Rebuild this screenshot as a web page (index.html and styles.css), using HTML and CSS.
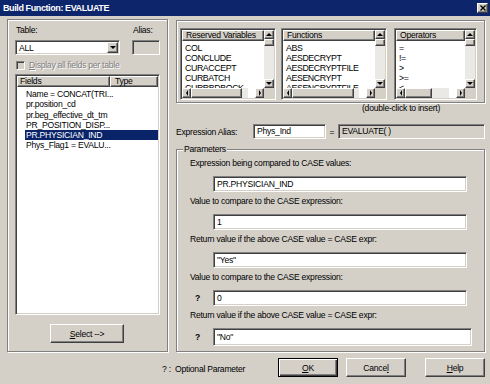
FILE: index.html
```html
<!DOCTYPE html>
<html lang="en">
<head>
    <meta charset="UTF-8">
    <title>Build Function: EVALUATE</title>
    <link rel="stylesheet" href="styles.css">
</head>
<body>
<div class="dialog">
    <div class="titlebar">
        <span class="title">Build Function: EVALUATE</span>
        <span class="close raised">
            <svg width="6" height="6" viewBox="0 0 6 6"><path d="M0.5 0.5L5.5 5.5M5.5 0.5L0.5 5.5" stroke="#000" stroke-width="1.4"/></svg>
        </span>
    </div>

    <div class="main">
        <!-- Left: table / fields -->
        <div class="group left-group">
            <div class="table-row">
                <div class="table-col">
                    <div class="lbl">Table:</div>
                    <div class="combo sunken">
                        <span class="combo-text">ALL</span>
                        <span class="combo-btn raised arr down"></span>
                    </div>
                </div>
                <div class="alias-col">
                    <div class="lbl">Alias:</div>
                    <div class="alias-box sunken"></div>
                </div>
            </div>
            <div class="check-row">
                <span class="checkbox sunken"></span>
                <span class="disabled"><u>D</u>isplay all fields per table</span>
            </div>
            <div class="fields sunken">
                <div class="fields-head">
                    <span class="hdr raised hdr-fields">Fields</span>
                    <span class="hdr raised hdr-type">Type</span>
                </div>
                <ul class="fields-list">
                    <li>Name = CONCAT(TRI...</li>
                    <li>pr.position_cd</li>
                    <li>pr.beg_effective_dt_tm</li>
                    <li>PR_POSITION_DISP...</li>
                    <li class="selected">PR.PHYSICIAN_IND</li>
                    <li>Phys_Flag1 = EVALU...</li>
                </ul>
            </div>
            <div class="select-row">
                <button class="push select"><u>S</u>elect --&gt;</button>
            </div>
        </div>

        <!-- Right: lists, alias, parameters -->
        <div class="right">
            <div class="group lists">
                <div class="listbox sunken lb-vars">
                    <div class="hdr raised">Reserved Variables</div>
                    <div class="vscroll">
                        <span class="sb-btn raised arr up"></span>
                        <span class="thumb raised"></span>
                        <span class="track"></span>
                        <span class="sb-btn raised arr down"></span>
                    </div>
                    <ul class="items">
                        <li>COL</li>
                        <li>CONCLUDE</li>
                        <li>CURACCEPT</li>
                        <li>CURBATCH</li>
                        <li>CURRBDBOCK</li>
                    </ul>
                    <div class="hscroll">
                        <span class="sb-btn raised arr left"></span>
                        <span class="thumb raised" style="width: 51px"></span>
                        <span class="track"></span>
                        <span class="sb-btn raised arr right"></span>
                    </div>
                    <span class="corner"></span>
                </div>

                <div class="listbox sunken lb-funcs">
                    <div class="hdr raised">Functions</div>
                    <div class="vscroll">
                        <span class="sb-btn raised arr up"></span>
                        <span class="thumb raised"></span>
                        <span class="track"></span>
                        <span class="sb-btn raised arr down"></span>
                    </div>
                    <ul class="items">
                        <li>ABS</li>
                        <li>AESDECRYPT</li>
                        <li>AESDECRYPTFILE</li>
                        <li>AESENCRYPT</li>
                        <li>AESENCRYPTFILE</li>
                    </ul>
                    <div class="hscroll">
                        <span class="sb-btn raised arr left"></span>
                        <span class="thumb raised" style="width: 62px"></span>
                        <span class="track"></span>
                        <span class="sb-btn raised arr right"></span>
                    </div>
                    <span class="corner"></span>
                </div>

                <div class="listbox sunken lb-ops">
                    <div class="hdr raised">Operators</div>
                    <div class="vscroll">
                        <span class="sb-btn raised arr up"></span>
                        <span class="thumb raised"></span>
                        <span class="track"></span>
                        <span class="sb-btn raised arr down"></span>
                    </div>
                    <ul class="items">
                        <li>=</li>
                        <li>!=</li>
                        <li>&gt;</li>
                        <li>&gt;=</li>
                        <li>&lt;</li>
                    </ul>
                    <div class="hscroll">
                        <span class="sb-btn raised arr left"></span>
                        <span class="thumb raised" style="width: 27px"></span>
                        <span class="track"></span>
                        <span class="sb-btn raised arr right"></span>
                    </div>
                    <span class="corner"></span>
                </div>
            </div>

            <div class="hint">(double-click to insert)</div>

            <div class="alias-row">
                <span class="alias-lbl">Expression Alias:</span>
                <div class="field sunken alias-field">Phys_Ind</div>
                <span class="eq">=</span>
                <div class="field sunken readonly">EVALUATE( )</div>
            </div>

            <div class="group params">
                <span class="caption">Parameters</span>

                <div class="p-lbl">Expression being compared to CASE values:</div>
                <div class="p-row"><span class="opt"></span><div class="field sunken">PR.PHYSICIAN_IND</div></div>

                <div class="p-lbl">Value to compare to the CASE expression:</div>
                <div class="p-row"><span class="opt"></span><div class="field sunken">1</div></div>

                <div class="p-lbl">Return value if the above CASE value = CASE expr:</div>
                <div class="p-row"><span class="opt"></span><div class="field sunken">"Yes"</div></div>

                <div class="p-lbl">Value to compare to the CASE expression:</div>
                <div class="p-row"><span class="opt">?</span><div class="field sunken">0</div></div>

                <div class="p-lbl">Return value if the above CASE value = CASE expr:</div>
                <div class="p-row last"><span class="opt">?</span><div class="field sunken">"No"</div></div>
            </div>
        </div>
    </div>

    <div class="footer">
        <span class="legend-note">? :&nbsp; Optional Parameter</span>
        <button class="push default"><u>O</u>K</button>
        <button class="push cancel">Cance<u>l</u></button>
        <button class="push help"><u>H</u>elp</button>
    </div>
</div>
</body>
</html>
```

FILE: styles.css
```css
* { box-sizing: border-box; }

body {
    margin: 0;
    background: #d4d0c8;
    font-family: "Liberation Sans", Arial, sans-serif;
    font-size: 8.6px;
    letter-spacing: -0.25px;
    color: #000;
}

ul { list-style: none; margin: 0; padding: 0; }

.dialog { width: 490px; height: 384px; overflow: hidden; }

/* 3D borders, classic style */
.raised {
    background: #d4d0c8;
    border: 1px solid;
    border-color: #fff #404040 #404040 #fff;
    box-shadow: inset -1px -1px #808080;
}
.sunken {
    background: #fff;
    border: 1px solid;
    border-color: #808080 #fff #fff #808080;
    box-shadow: inset 1px 1px #404040, inset -1px -1px #d4d0c8;
    padding: 1px;
}
.group {
    border: 1px solid #808080;
    box-shadow: inset 1px 1px #fff, 1px 1px #fff;
}

/* arrows for scroll / combo buttons */
.arr { display: flex; align-items: center; justify-content: center; }
.arr::before { content: ""; width: 0; height: 0; border: 3px solid transparent; }
.arr.up::before { border-top-width: 0; border-bottom-color: #000; }
.arr.down::before { border-bottom-width: 0; border-top-color: #000; }
.arr.left::before { border-width: 3px 2px 3px 0; border-right-color: #000; }
.arr.right::before { border-width: 3px 0 3px 2px; border-left-color: #000; }

/* title bar */
.titlebar {
    height: 16px;
    background: #0c256b;
    display: flex;
    align-items: center;
    justify-content: space-between;
    padding: 0 2px 1px 3px;
}
.title {
    color: #fff;
    font-weight: bold;
    font-size: 9px;
    letter-spacing: -0.4px;
}
.close {
    width: 11px;
    height: 10px;
    display: flex;
    align-items: center;
    justify-content: center;
}

.main { display: flex; padding: 3px 5px 0 7px; }

/* left group */
.left-group { width: 161px; height: 333px; padding: 5px 7px 0 7px; }
.lbl { height: 10px; line-height: 10px; padding-left: 1px; }
.table-row { display: flex; }
.table-col { width: 105px; }
.alias-col { width: 28px; margin-left: 12px; }
.combo, .alias-box { margin-top: 5px; height: 15px; }
.combo { display: flex; align-items: center; padding: 1px 1px 1px 2px; }
.combo-text { flex: 1; padding-left: 1px; }
.combo-btn { width: 11px; height: 11px; }
.alias-box { background: #d4d0c8; }

.check-row { display: flex; align-items: center; height: 10px; margin-top: 5px; padding-left: 1px; }
.checkbox { width: 9px; height: 9px; background: #d4d0c8; padding: 0; }
.disabled { margin-left: 4px; color: #808080; text-shadow: 1px 1px #fff; }

.fields { margin-top: 4px; height: 241px; width: 145px; }
.fields-head { display: flex; height: 11px; }
.hdr { height: 11px; line-height: 9px; white-space: nowrap; overflow: hidden; }
.hdr-fields { width: 93px; padding-left: 2px; }
.hdr-type { flex: 1; padding-left: 4px; }
.fields-list { padding-top: 2px; }
.fields-list li { margin-left: 8px; padding-left: 1px; height: 10.3px; line-height: 10.3px; white-space: nowrap; }
.fields-list li.selected { background: #0a246a; color: #fff; }

.select-row { margin-top: 9px; padding-left: 35px; }

button.push {
    font: inherit;
    letter-spacing: inherit;
    color: #000;
    padding: 0;
    height: 19px;
    background: #d4d0c8;
    border: 1px solid;
    border-color: #fff #404040 #404040 #fff;
    box-shadow: inset -1px -1px #808080;
}
.select { width: 74px; }

/* right side */
.right { width: 310px; margin-left: 7px; }

.lists {
    margin: 1px 0 0 1px;
    width: 309px;
    height: 83px;
    padding: 7px 0 0 3px;
    display: flex;
}
.listbox {
    height: 72px;
    display: grid;
    grid-template-columns: 1fr 10px;
    grid-template-rows: 11px 1fr 10px;
    overflow: hidden;
}
.lb-vars { width: 96px; }
.lb-funcs { width: 106px; margin-left: 5px; }
.lb-ops { width: 83px; margin-left: 7px; }
.listbox .hdr { padding-left: 3px; }
.vscroll { grid-column: 2; grid-row: 1 / 3; display: flex; flex-direction: column; }
.vscroll .sb-btn { height: 9px; }
.vscroll .thumb { height: 7px; }
.track { flex: 1; background: #ebe9e5; }
.items { grid-column: 1; grid-row: 2; padding: 2px 0 0 3px; overflow: hidden; line-height: 10px; font-size: 8.8px; letter-spacing: -0.4px; white-space: nowrap; }
.hscroll { grid-column: 1; grid-row: 3; display: flex; }
.hscroll .sb-btn { width: 9px; }
.corner { background: #d4d0c8; }

.hint { height: 10px; line-height: 10px; padding-left: 187px; }

.alias-row { display: flex; align-items: center; margin: 11px 0 0 1px; height: 15px; }
.alias-lbl { width: 77px; }
.field { height: 16px; line-height: 12px; padding-left: 3px; white-space: nowrap; }
.alias-row .field { height: 15px; line-height: 11px; }
.alias-field { width: 73px; }
.eq { width: 12px; text-align: center; }
.readonly { width: 147px; background: #d4d0c8; }

.params {
    position: relative;
    margin: 10px 0 0 1px;
    width: 309px;
    height: 203px;
    padding: 8px 0 0 13px;
}
.caption {
    position: absolute;
    top: -6px;
    left: 6px;
    padding: 0 1px;
    line-height: 10px;
    background: #d4d0c8;
}
.p-lbl { height: 10px; line-height: 10px; }
.p-row { display: flex; margin: 8px 0 4px; }
.p-row .field { width: 254px; }
.p-row.last .field { width: 259px; height: 18px; line-height: 14px; }
.opt { width: 23px; padding-left: 5px; font-weight: bold; line-height: 16px; }
.p-row.last .opt { line-height: 18px; }

/* footer */
.footer { display: flex; align-items: center; padding: 6px 0 0 162px; }
.legend-note { width: 116px; padding-top: 3px; }
.footer .push { width: 60px; }
.footer .cancel { margin-left: 8px; }
.footer .help { margin-left: 19px; }
button.default {
    border: 1px solid #000;
    box-shadow: inset 1px 1px #fff, inset -1px -1px #404040, inset -2px -2px #808080;
}
```
